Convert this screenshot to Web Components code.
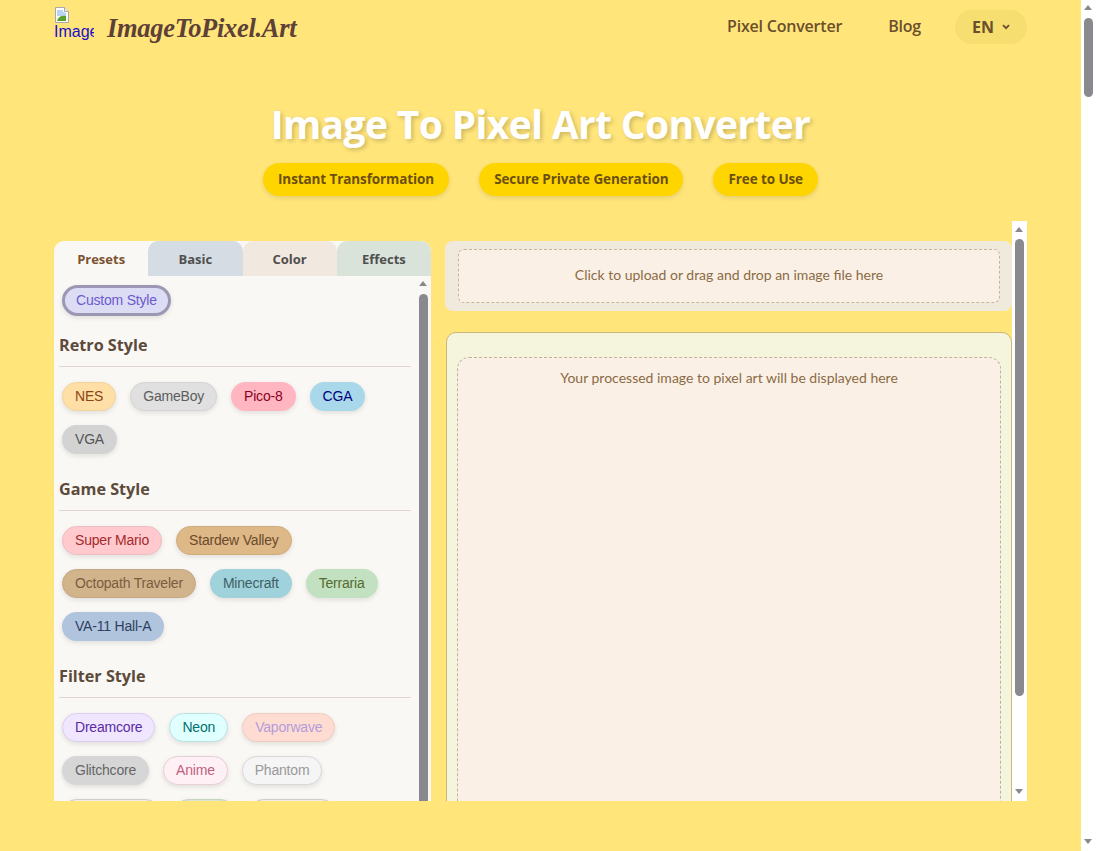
<!DOCTYPE html>
<html lang="en"><head><meta charset="utf-8"><title>Image To Pixel Art Converter</title>
<style>
html,body{margin:0;height:851px;overflow:hidden;background:#FFE57A}
body{font-family:Lato,"Noto Sans",sans-serif;color:#5D4037}
</style></head><body>
<app-shell>
  <site-header></site-header>
  <hero-block title-text="Image To Pixel Art Converter">
    <hero-badge>Instant Transformation</hero-badge>
    <hero-badge>Secure Private Generation</hero-badge>
    <hero-badge>Free to Use</hero-badge>
  </hero-block>
  <work-space>
    <preset-panel slot="left"></preset-panel>
    <output-pane slot="right"></output-pane>
  </work-space>
</app-shell>
<script>
const BOLD='"Open Sans",Lato,sans-serif';
function def(name, css, html, init){
  customElements.define(name, class extends HTMLElement{
    constructor(){super();this.attachShadow({mode:'open'}).innerHTML='<style>'+css+'</style>'+html;}
    connectedCallback(){ if(init) init.call(this,this.shadowRoot); }
  });
}
def('fake-scrollbar',`
  :host{display:flex;flex-direction:column;align-items:center;width:15px;flex:none;position:relative;background:var(--track,#fff)}
  .up,.down{width:0;height:0;border-left:4.5px solid transparent;border-right:4.5px solid transparent;position:absolute;left:3px}
  .up{top:var(--arrow-top,5px);border-bottom:5px solid #8a8a8e}
  .down{bottom:var(--arrow-bottom,5px);border-top:5px solid #8a8a8e}
  .thumb{position:absolute;left:3px;width:9px;top:var(--thumb-top,18px);height:var(--thumb-h,79px);background:#8a8a8e;border-radius:5px}
`,`<div class="up"></div><div class="thumb"></div><div class="down"></div>`);

def('app-shell',`
  :host{display:flex;width:1096px;height:851px;overflow:hidden}
  .page{width:1081px;flex:none;padding:0 54px;box-sizing:border-box}
  fake-scrollbar{--thumb-top:18px;--thumb-h:79px;--arrow-top:5px;--arrow-bottom:7px;height:851px}
`,`<div class="page"><slot></slot></div><fake-scrollbar></fake-scrollbar>`);

def('site-header',`
  :host{display:flex;align-items:center;height:54px}
  .img{width:40px;height:40px;overflow:hidden;flex:none;margin-right:13px;font:16px/17px "Liberation Sans",sans-serif;color:#1a0dcc;align-self:flex-start;margin-top:7px;white-space:nowrap}
  .img svg{display:block}
  .logo{font:italic 700 26.5px "Liberation Serif",serif;color:#5D4037;letter-spacing:-.3px;white-space:nowrap;margin-top:2px}
  nav{margin-left:auto;display:flex;align-items:center}
  a{font:600 16px ${BOLD};letter-spacing:-.2px;color:#6B4F2C;text-decoration:none;margin-top:-3px;white-space:nowrap}
  a+a{margin-left:46px}
  .lang{margin-left:34px;width:72px;height:34px;border-radius:17px;background:#F6DE70;display:flex;align-items:center;justify-content:center;gap:8px;font:700 16px ${BOLD};color:#6B4F2C}
`,`<div class="img"><svg width="16" height="16" viewBox="0 0 16 16"><path d="M1.5.5h9l4 4v11h-13z" fill="#fff" stroke="#a9a9a9"/><path d="M10.5.5v4h4" fill="#eee" stroke="#a9a9a9"/><path d="M3 3h6v2l3 1v3H3z" fill="#b9d3f5"/><path d="M3 14c1-4 4-6 9-5v5z" fill="#5aa02c"/></svg>Image</div>
  <div class="logo">ImageToPixel.Art</div>
  <nav><a>Pixel Converter</a><a>Blog</a><div class="lang">EN<svg width="8" height="6" viewBox="0 0 8 6"><path d="M1 1.2l3 3 3-3" fill="none" stroke="#6B4F2C" stroke-width="1.8"/></svg></div></nav>`);

def('hero-block',`
  :host{display:block;text-align:center}
  h1{margin:0;padding-top:43px;font:700 39px/53px ${BOLD};letter-spacing:-.65px;color:#fff;text-shadow:2px 2px 4px rgba(0,0,0,.2);white-space:nowrap}
  .row{display:flex;justify-content:center;gap:30px;margin-top:13px}
`,`<h1></h1><div class="row"><slot></slot></div>`,function(r){r.querySelector('h1').textContent=this.getAttribute('title-text')});

def('hero-badge',`
  :host{display:block;height:33px;padding:0 15px;border-radius:17px;background:#FFD500;color:#6B4F10;font:700 13.5px/32px ${BOLD};letter-spacing:-.1px;box-shadow:0 2px 5px rgba(0,0,0,.1);white-space:nowrap}
`,`<slot></slot>`);

def('work-space',`
  :host{display:flex;gap:14px;margin-top:25px;height:580px;align-items:flex-start}
  ::slotted([slot=left]){margin-top:20px}
`,`<slot name="left"></slot><slot name="right"></slot>`);

def('tab-bar',`
  :host{display:grid;grid-template-columns:repeat(4,1fr);height:35px;flex:none}
  div{display:flex;align-items:center;justify-content:center;font:700 13px ${BOLD};color:#4f4f4f;border-radius:10px 10px 0 0}
  .a{background:#FAF8F5;color:#7A5230}.b{background:#D6DCE4}.c{background:#F1E8E0}.d{background:#DAE3DA}
`,`<div class="a">Presets</div><div class="b">Basic</div><div class="c">Color</div><div class="d">Effects</div>`);

def('preset-chip',`
  :host{display:inline-block;box-sizing:border-box;height:29px;padding:0 12px;border-radius:15px;border:1px solid var(--bd,transparent);background:var(--bg);color:var(--fg);font:14px/26px "Liberation Sans",Arial,sans-serif;letter-spacing:-.2px;box-shadow:0 2px 5px rgba(0,0,0,.1);white-space:nowrap}
  :host([active]){height:31px;line-height:24px;border:3px solid #9C97B3;background:#DDDCF5;color:#6A5ACD;padding:0 11px;border-radius:16px}
`,`<slot></slot>`);

def('preset-group',`
  :host{display:block}
  h3{margin:0;font:700 16.2px/24px ${BOLD};color:#5C4A3A}
  hr{border:0;border-top:1px solid #E3D4CF;margin:9px 0 15px}
  .chips{display:flex;flex-wrap:wrap;gap:14px;padding-left:3px}
`,`<h3></h3><hr><div class="chips"><slot></slot></div>`,function(r){r.querySelector('h3').textContent=this.getAttribute('label')});

const groups=[
 ['Retro Style',[['NES','#FFDFA6','#8B4513','#F2D39B'],['GameBoy','#E0E0E0','#5c5c5c','#d4d4d4'],['Pico-8','#FFB6C1','#8B0020'],['CGA','#A8D8EA','#000080'],['VGA','#D3D3D3','#555']]],
 ['Game Style',[['Super Mario','#FFC9CE','#A52A2A','#F0BCC1'],['Stardew Valley','#DEB887','#6B4A2B','#D0AB7C'],['Octopath Traveler','#D2B48C','#7A5C3E','#C6A880'],['Minecraft','#A0D2DB','#3F5F66'],['Terraria','#C1E1C1','#556B2F'],['VA-11 Hall-A','#B0C4DE','#2F3F60']]],
 ['Filter Style',[['Dreamcore','#F0E6FF','#5B2C9F','#DCCDF2'],['Neon','#E0FFFF','#007070','#B9E3E3'],['Vaporwave','#FFDCD2','#B39DDB','#F0CBBF'],['Glitchcore','#D6D6D6','#666'],['Anime','#FFF0F5','#C0627F','#E6CFD6'],['Phantom','#F5F5F5','#999','#D9D9D9'],[null,'#eee','#888','#ccc',98],[null,'#D6E6D0','#888','#c4d4be',61],[null,'#eee','#888','#ccc',87]]]
];
def('preset-panel',`
  :host{display:flex;flex-direction:column;width:377px;height:560px;overflow:hidden;border-radius:10px 10px 0 0;background:#FAF8F5;flex:none}
  .body{display:flex;flex:1;min-height:0}
  .list{flex:1;padding:9px 5px 0;overflow:hidden;min-width:0}
  .top{padding-left:3px;margin-bottom:17px;display:block;height:31px}
  preset-group{margin-bottom:23px}
  fake-scrollbar{--track:#FAF8F5;--arrow-top:5px;--thumb-top:18px;--thumb-h:600px;--arrow-bottom:-30px;overflow:hidden}
`,`<tab-bar></tab-bar><div class="body"><div class="list"><div class="top"><preset-chip active>Custom Style</preset-chip></div></div><fake-scrollbar></fake-scrollbar></div>`,function(r){
  const list=r.querySelector('.list');
  for(const [label,items] of groups){
    const g=document.createElement('preset-group');g.setAttribute('label',label);
    for(const [t,bg,fg,bd,w] of items){
      const c=document.createElement('preset-chip');
      c.style.setProperty('--bg',bg);c.style.setProperty('--fg',fg);if(bd)c.style.setProperty('--bd',bd);
      if(t)c.textContent=t;else c.style.width=w+'px';
      g.appendChild(c);
    }
    list.appendChild(g);
  }
});

def('output-pane',`
  :host{display:flex;width:582px;height:580px;overflow:hidden;flex:none}
  .content{width:567px;flex:none;padding-top:20px;box-sizing:border-box;overflow:hidden;font-size:14px;color:#8B6B45;text-align:center}
  .up{background:#F0EADC;border-radius:8px;height:70px;box-sizing:border-box;padding:8px 12px 8px 13px}
  .up div{height:54px;box-sizing:border-box;border:1px dashed #C4B69A;border-radius:6px;background:#FAF0E6;line-height:50px}
  .res{margin:21px 0 0 1px;height:600px;box-sizing:border-box;border:1px solid #C9B77A;border-radius:10px;background:#F5F4DC;padding:24px 10px 0}
  .res div{height:600px;box-sizing:border-box;border:1px dashed #BDB39A;border-radius:12px;background:#FAF0E6;padding-top:11px;line-height:18px}
  fake-scrollbar{--arrow-top:6px;--thumb-top:18px;--thumb-h:457px;--arrow-bottom:7px;height:580px}
`,`<div class="content"><div class="up"><div>Click to upload or drag and drop an image file here</div></div><div class="res"><div>Your processed image to pixel art will be displayed here</div></div></div><fake-scrollbar></fake-scrollbar>`);
</script>
</body></html>
